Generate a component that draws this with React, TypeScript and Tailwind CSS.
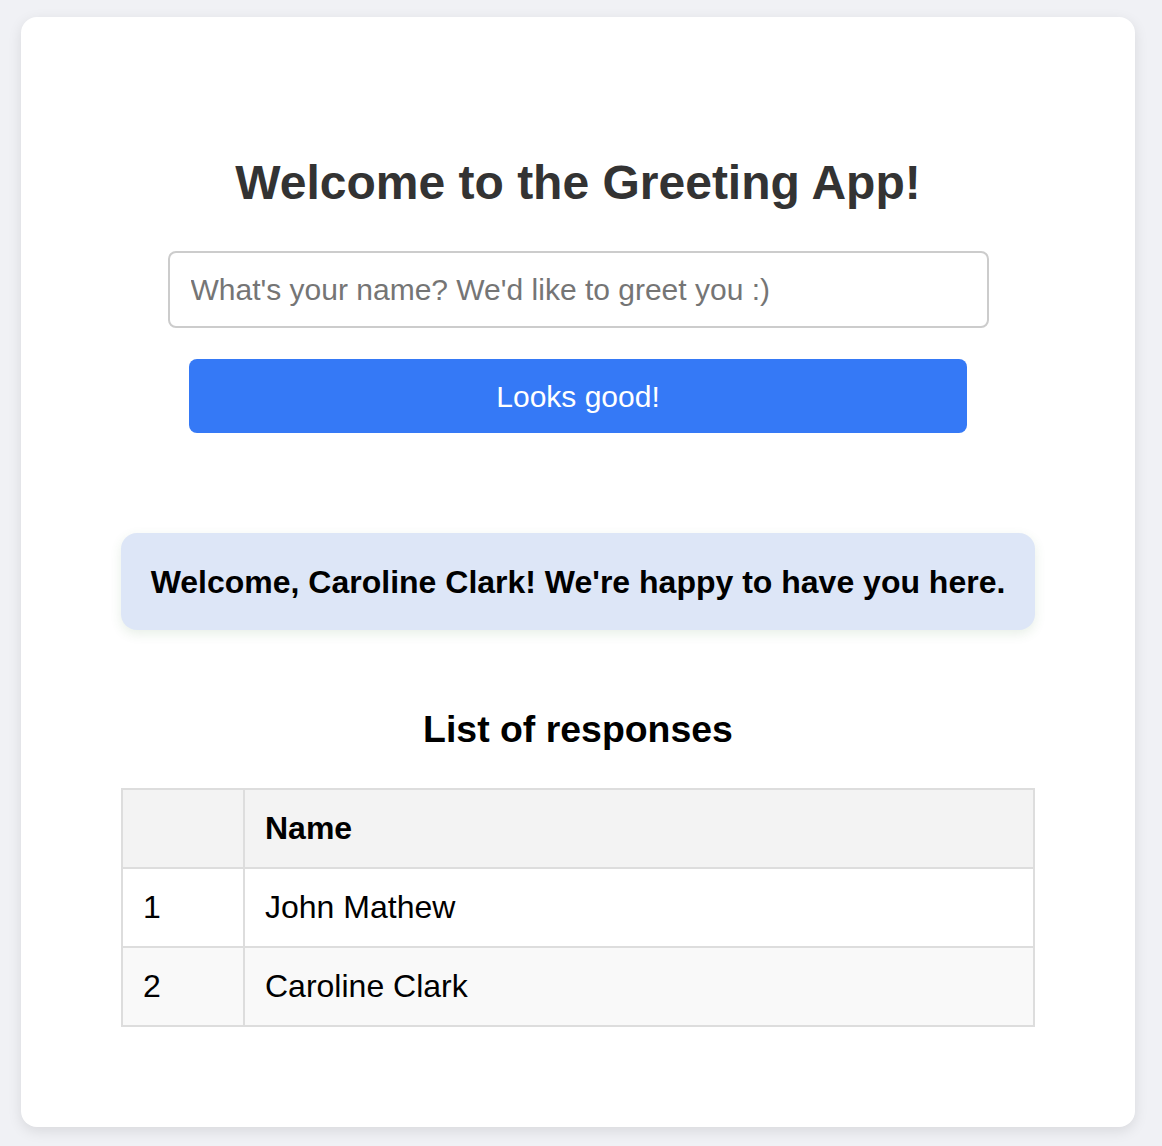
import { useState } from "react";

const RESPONSES = ["John Mathew", "Caroline Clark"];

export default function App() {
  const [name, setName] = useState("");

  return (
    <div
      className="min-h-[1146px] bg-[#f0f1f5] pt-[17px] pb-[19px] pl-[21px]"
      style={{ fontFamily: '"Liberation Sans", Arial, Helvetica, sans-serif' }}
    >
      <div className="w-[1114px] h-[1110px] bg-white rounded-[16px] shadow-[0_4px_14px_rgba(0,0,0,0.1)] px-[100px] pt-[138px]">
        {/* Heading */}
        <h1 className="text-center text-[48px] leading-[56px] font-bold text-[#333]">
          Welcome to the Greeting App!
        </h1>

        {/* Form */}
        <div className="mt-[40px] flex flex-col items-center">
          <input
            value={name}
            onChange={(e) => setName(e.target.value)}
            placeholder="What's your name? We'd like to greet you :)"
            className="w-[821px] h-[77px] border-2 border-[#ccc] rounded-[8px] px-[21px] text-[30px] text-[#333] placeholder:text-[#757575] outline-none"
          />
          <button className="mt-[31px] w-[778px] h-[74px] bg-[#3579f6] text-white text-[30px] rounded-[8px]">
            Looks good!
          </button>
        </div>

        {/* Greeting */}
        <div className="mt-[100px] h-[97px] bg-[#dde6f7] rounded-[16px] shadow-[0_4px_12px_rgba(60,120,60,0.12)] flex items-center justify-center">
          <p className="text-[32px] font-bold text-black">
            Welcome, Caroline Clark! We're happy to have you here.
          </p>
        </div>

        {/* Responses */}
        <h3 className="mt-[78px] text-center text-[37.44px] leading-[43px] font-bold text-black">
          List of responses
        </h3>

        <table className="mt-[37px] w-full border-collapse text-[32px] leading-[37px] text-black">
          <thead>
            <tr className="bg-[#f3f3f3]">
              <th className="w-[122px] border-2 border-[#ddd] px-[20px] py-[20px] text-left font-bold"></th>
              <th className="border-2 border-[#ddd] px-[20px] py-[20px] text-left font-bold">Name</th>
            </tr>
          </thead>
          <tbody>
            {RESPONSES.map((r, i) => (
              <tr key={r} className={i % 2 === 1 ? "bg-[#f9f9f9]" : "bg-white"}>
                <td className="border-2 border-[#ddd] px-[20px] py-[20px]">{i + 1}</td>
                <td className="border-2 border-[#ddd] px-[20px] py-[20px]">{r}</td>
              </tr>
            ))}
          </tbody>
        </table>
      </div>
    </div>
  );
}
